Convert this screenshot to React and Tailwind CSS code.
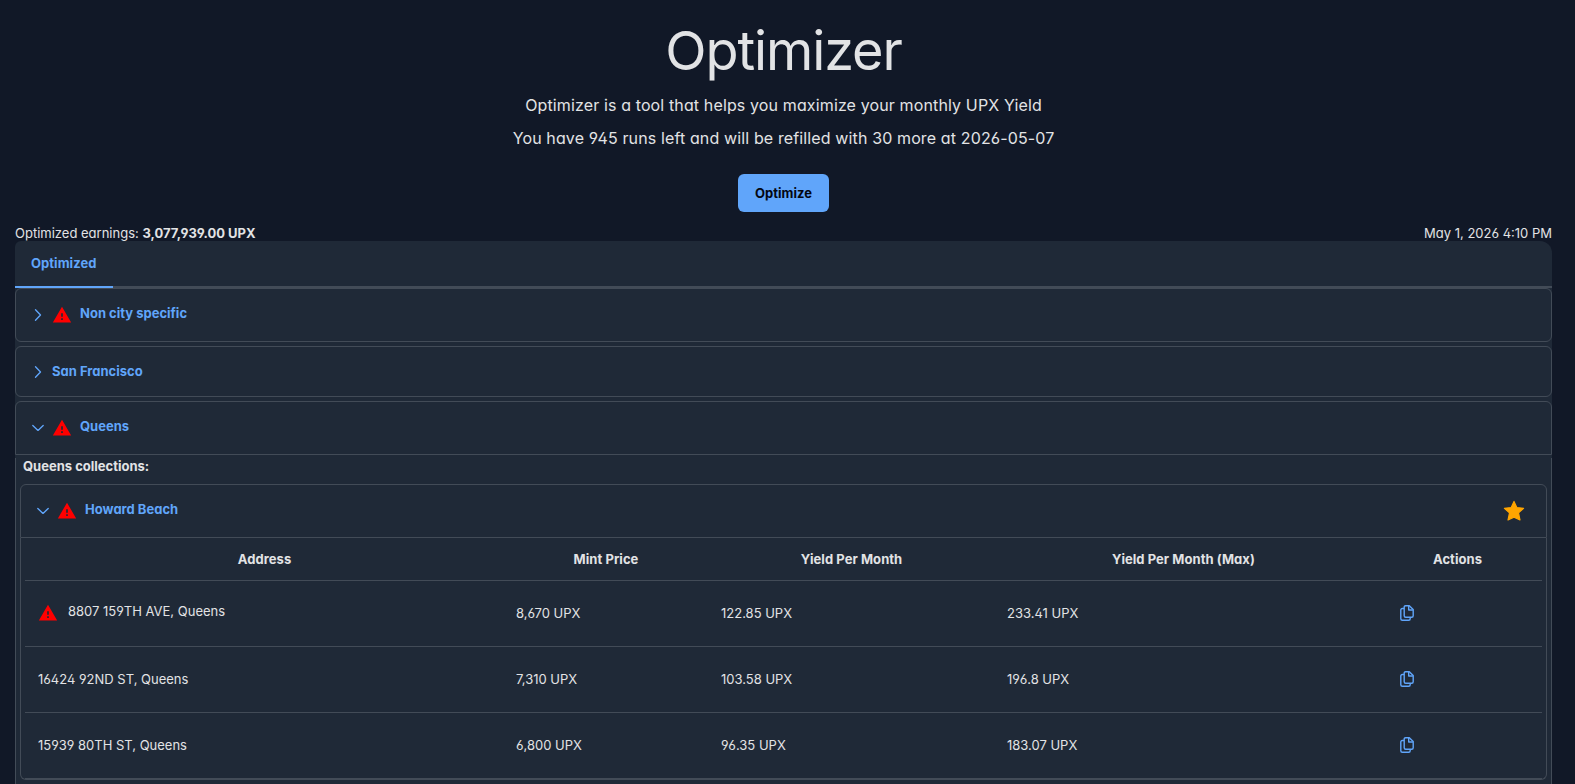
import React from "react";
import { MdWarning } from "react-icons/md";

const cities = [
  { name: "Non city specific", warn: true },
  { name: "San Francisco", warn: false },
];

const rows = [
  { address: "8807 159TH AVE, Queens", mint: "8,670 UPX", yield: "122.85 UPX", max: "233.41 UPX", warn: true },
  { address: "16424 92ND ST, Queens", mint: "7,310 UPX", yield: "103.58 UPX", max: "196.8 UPX" },
  { address: "15939 80TH ST, Queens", mint: "6,800 UPX", yield: "96.35 UPX", max: "183.07 UPX" },
];

const Chevron = ({ open }) => (
  <svg viewBox="0 0 14 14" className="w-3.5 h-3.5 shrink-0 -ml-[0.6px] -mr-[1.4px]" fill="none" stroke="currentColor" strokeWidth="1.35" strokeLinecap="round" strokeLinejoin="round">
    <path d={open ? "M1.8 4.4 L7 9.4 L12.2 4.4" : "M4.5 1.8 L9.5 7 L4.5 12.2"} />
  </svg>
);

const Warning = () => <MdWarning className="w-5 h-5 shrink-0 text-[#ff0000]" />;

const Star = () => (
  <svg viewBox="0 0 22 22" className="w-[22px] h-[22px]" fill="#ffa500" stroke="#ffa500" strokeWidth="1.2" strokeLinejoin="round">
    <path d="M11 1.4 L13.8 7.6 L20.6 8.3 L15.5 12.9 L17 20 L11 17.2 L5 20 L6.5 12.9 L1.4 8.3 L8.2 7.6 Z" />
  </svg>
);

const Copy = () => (
  <svg viewBox="0 0 14 16" className="w-3.5 h-4" fill="none" stroke="currentColor" strokeWidth="1.4" strokeLinejoin="round">
    <path d="M5.6 0.7 H9.3 L13.2 4.6 V10.8 Q13.2 12.3 11.7 12.3 H5.7 Q4.2 12.3 4.2 10.8 V2.1 Q4.2 0.7 5.6 0.7 Z" />
    <path d="M8.7 0.9 V5 H12.9" />
    <path d="M4.2 3.5 H2.3 Q0.8 3.5 0.8 5 V13.8 Q0.8 15.3 2.3 15.3 H8.7 Q10.2 15.3 10.2 13.8 V12.4" />
  </svg>
);

const Header = ({ name, warn, open, children }) => (
  <div
    className={`flex items-center px-4 border border-[#424b57] text-[#60a5fa] font-bold ${warn ? "h-[54px]" : "h-[51px]"} ${open ? "rounded-t-md" : "rounded-md"}`}
  >
    <Chevron open={open} />
    <div className="flex items-center gap-2 ml-2">
      {warn && <Warning />}
      <span className={warn ? "pb-[4px]" : "pb-px"}>{name}</span>
    </div>
    {children}
  </div>
);

const Th = ({ children }) => <th className="p-0 pl-px font-bold tracking-[0.05px] text-center border-b border-[#424b57]">{children}</th>;
const Td = ({ children }) => <td className="pt-0 pb-px px-[13px] border-b border-[#424b57]">{children}</td>;

const App = () => (
  <div className="h-[784px] overflow-hidden bg-[#111827] text-[#e2e3e5] text-[13px] leading-[17px] font-['Inter',sans-serif] [font-feature-settings:'cv02','cv03','cv04','cv11']">
    <div className="w-[1567px] px-[15px]">
      <div className="flex flex-col items-center h-[225px]">
        <h1 className="mt-[19px] text-[54px] leading-[64px] font-normal tracking-[-1.1px]">Optimizer</h1>
        <p className="mt-2.5 text-base leading-6 tracking-[0.13px]">Optimizer is a tool that helps you maximize your monthly UPX Yield</p>
        <p className="mt-[9px] text-base leading-6 tracking-[0.13px]">You have 945 runs left and will be refilled with 30 more at 2026-05-07</p>
        <button className="mt-6 h-[38px] w-[91px] rounded-md bg-[#60a5fa] text-[#030712] font-bold tracking-[0.05px]">Optimize</button>
      </div>
      <div className="flex justify-between h-4">
        <span>
          Optimized earnings: <b>3,077,939.00 UPX</b>
        </span>
        <span>May 1, 2026 4:10 PM</span>
      </div>

      <div className="bg-[#1f2937] rounded-tl-md rounded-tr-xl">
        <div className="flex h-[47px] border-b-2 border-[#424b57]">
          <div className="w-[98px] h-[47px] px-4 pt-3.5 border-b-2 border-[#60a5fa] text-[#60a5fa] font-bold tracking-[0.05px]">Optimized</div>
        </div>
        <div className="flex flex-col gap-1">
          {cities.map((c) => (
            <Header key={c.name} name={c.name} warn={c.warn} />
          ))}
          <Header name="Queens" warn open />
        </div>
        <div className="mt-[3px] px-1 pb-10 border-x border-[#424b57]">
          <p className="pl-[3px] h-[26px] leading-[17px] font-bold">Queens collections:</p>
          <Header name="Howard Beach" warn open>
            <div className="ml-auto mr-[5px] pb-px">
              <Star />
            </div>
          </Header>
          <div className="px-1 border border-t-0 border-[#424b57] rounded-b-md">
            <table className="w-full table-fixed border-separate border-spacing-0">
              <colgroup>
                <col className="w-[478px]" />
                <col className="w-[205px]" />
                <col className="w-[286px]" />
                <col className="w-[378px]" />
                <col />
              </colgroup>
              <thead>
                <tr className="h-[43px]">
                  <Th>Address</Th>
                  <Th>Mint Price</Th>
                  <Th>Yield Per Month</Th>
                  <Th>Yield Per Month (Max)</Th>
                  <Th>Actions</Th>
                </tr>
              </thead>
              <tbody>
                {rows.map((r) => (
                  <tr key={r.address} className="h-[66px]">
                    <Td>
                      <div className="flex items-center gap-2.5">
                        {r.warn && <Warning />}
                        <span className={r.warn ? "pb-[3px]" : ""}>{r.address}</span>
                      </div>
                    </Td>
                    <Td>{r.mint}</Td>
                    <Td>{r.yield}</Td>
                    <Td>{r.max}</Td>
                    <Td>
                      <button className="block ml-[15px] text-[#60a5fa]">
                        <Copy />
                      </button>
                    </Td>
                  </tr>
                ))}
              </tbody>
            </table>
          </div>
        </div>
      </div>
    </div>
  </div>
);

export default App;
